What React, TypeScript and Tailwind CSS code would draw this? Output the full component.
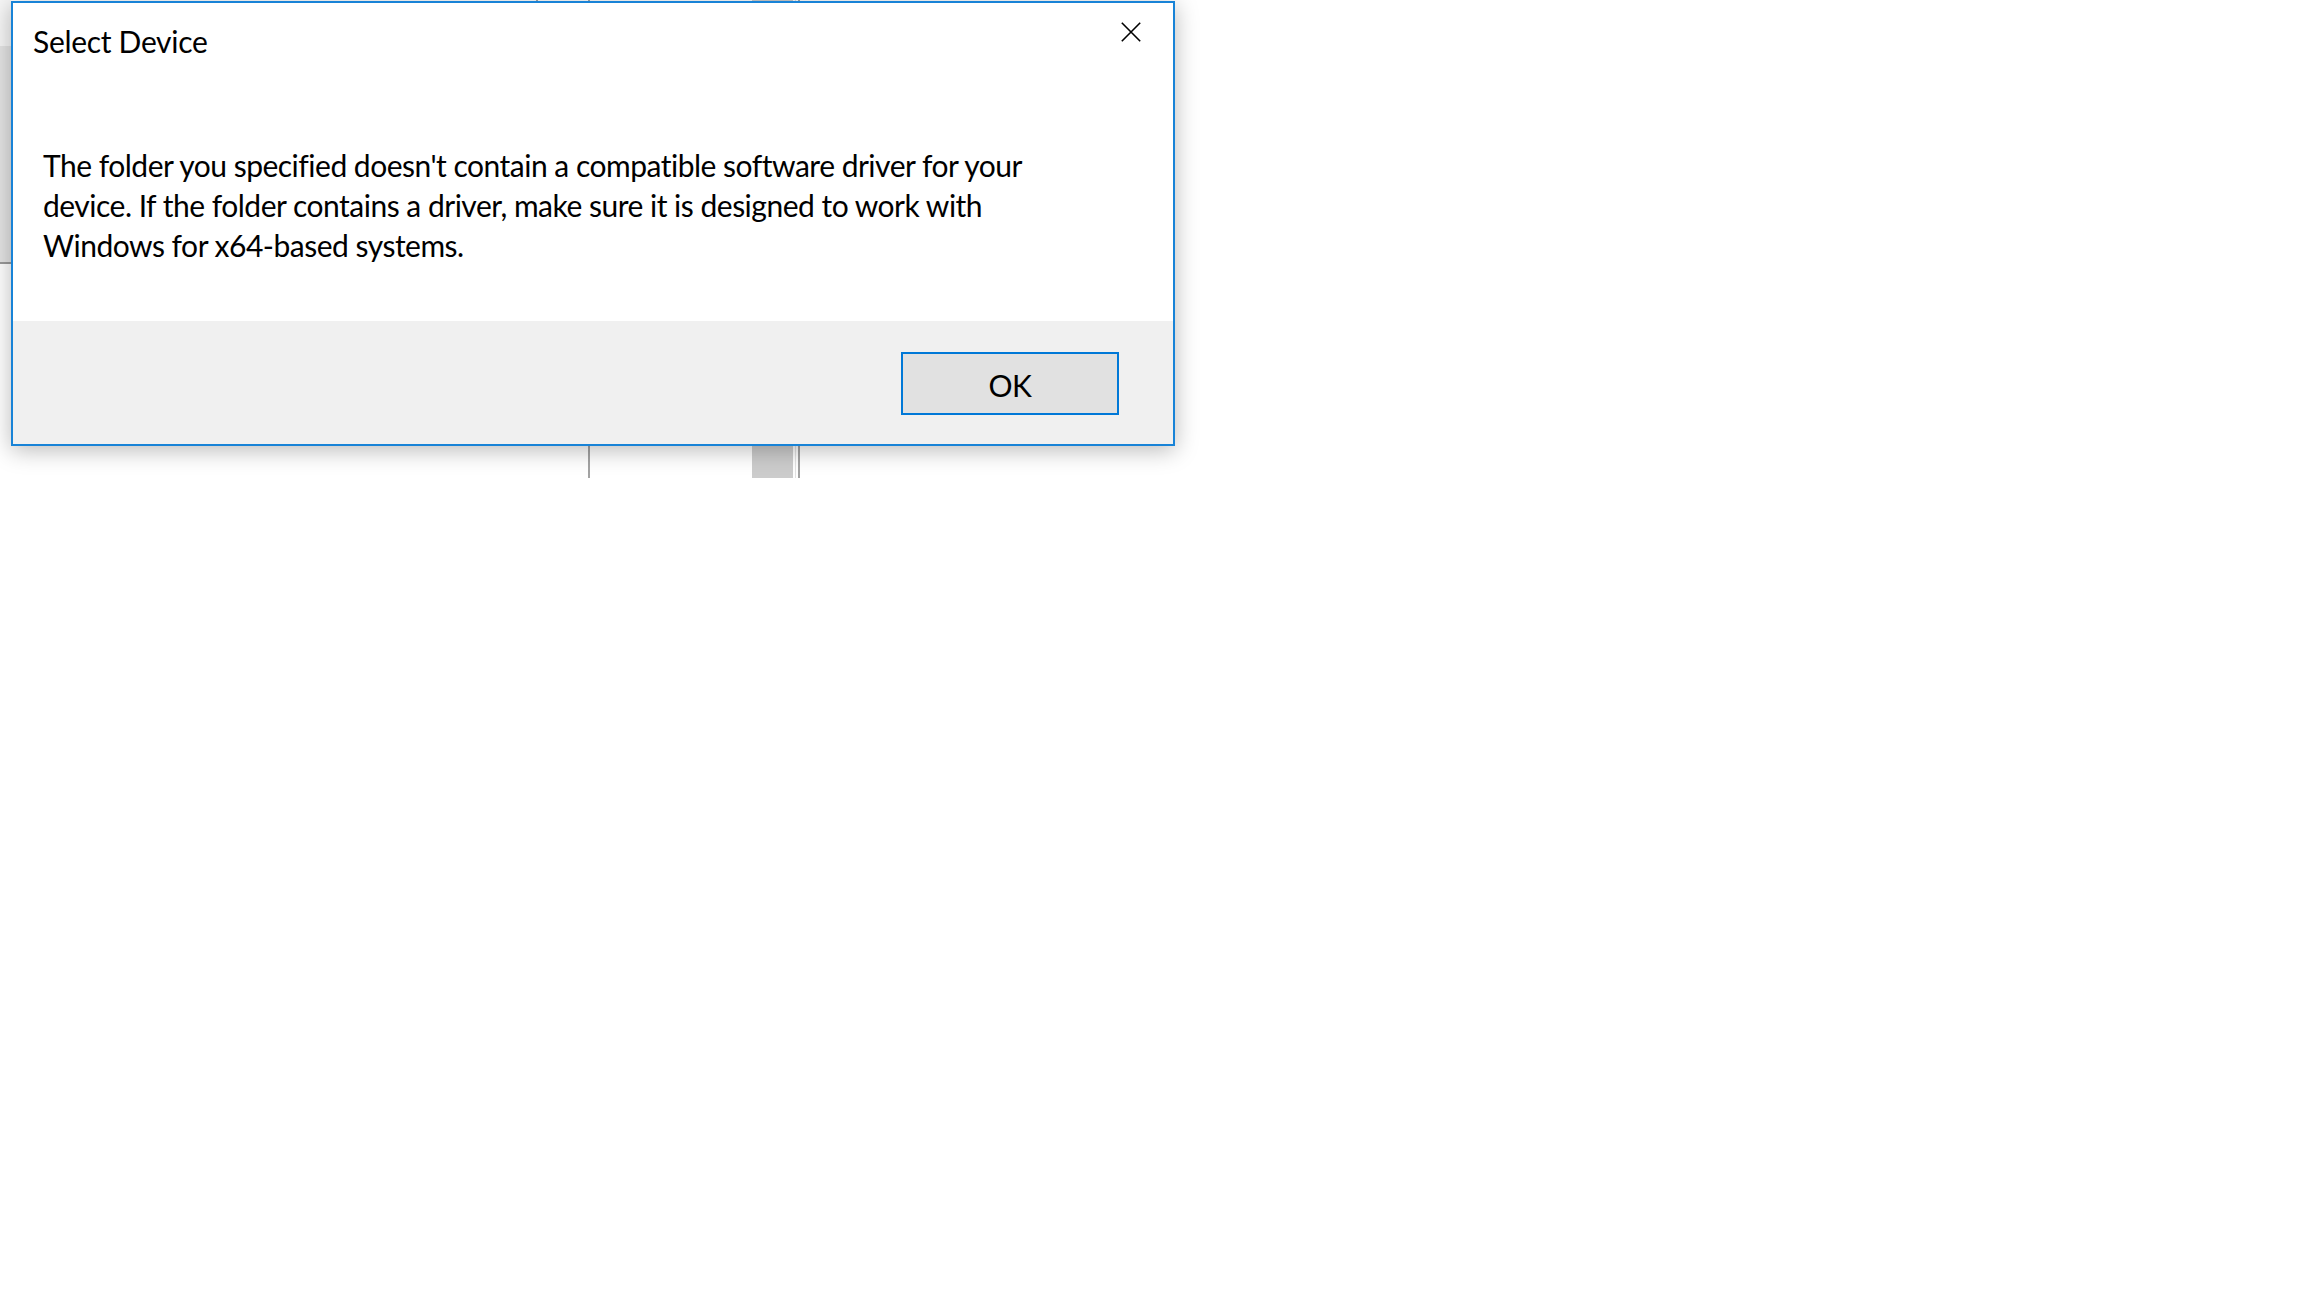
const font = { fontFamily: '"Segoe UI", Lato, "Noto Sans", sans-serif' };

function CloseGlyph() {
  return (
    <svg width="20" height="20" viewBox="0 0 20 20" className="mt-[1px] shrink-0">
      <path d="M0.8 0.8L19.2 19.2M19.2 0.8L0.8 19.2" stroke="#000" strokeWidth="1.6" fill="none" />
    </svg>
  );
}

// edges of the window that sits behind the dialog
function BackWindow() {
  return (
    <div className="flex items-start">
      <div className="w-[11px] h-[264px] bg-[#f6f6f6] flex flex-col">
        <div className="mt-[46px] h-[216px] bg-[#e4e4e4]" />
        <div className="h-[2px] bg-[#9a9a9a]" />
      </div>
      <div className="ml-[525px] w-[2px] h-[2px] bg-[#a3a3a3]" />
      <div className="ml-[50px] w-[2px] h-[478px] bg-[#a3a3a3]" />
      <div className="ml-[162px] w-[41px] h-[478px] bg-[#cccccc]" />
      <div className="ml-[2px] w-[1px] h-[478px] bg-[#e2e2e2]" />
      <div className="ml-[2px] w-[2px] h-[478px] bg-[#a3a3a3]" />
    </div>
  );
}

export default function App() {
  return (
    <div className="relative w-[2304px] h-[1296px] overflow-hidden bg-white" style={font}>
      <BackWindow />

      {/* dialog window */}
      <div className="absolute left-[11px] top-[1px] w-[1164px] flex flex-col border-2 border-[#1883d7] bg-white shadow-[0_4px_22px_rgba(0,0,0,0.28)] tracking-[-0.5px]">
        <div className="flex items-start justify-between pl-[20px] pr-[32px] pt-[18px]">
          <span className="text-[30px] leading-[40px] text-black tracking-[-0.3px]">Select Device</span>
          <CloseGlyph />
        </div>
        <p className="pl-[30px] pt-[84px] pb-[56px] text-[30px] leading-[40px] text-black">
          The folder you specified doesn't contain a compatible software driver for your
          <br />
          device. If the folder contains a driver, make sure it is designed to work with
          <br />
          Windows for x64-based systems.
        </p>
        <div className="flex justify-end bg-[#f0f0f0] pt-[31px] pb-[29px] pr-[54px]">
          <button className="w-[218px] h-[63px] pt-[2px] border-2 border-[#0078d7] bg-[#e1e1e1] text-[30px] leading-[40px] text-black">
            OK
          </button>
        </div>
      </div>
    </div>
  );
}
